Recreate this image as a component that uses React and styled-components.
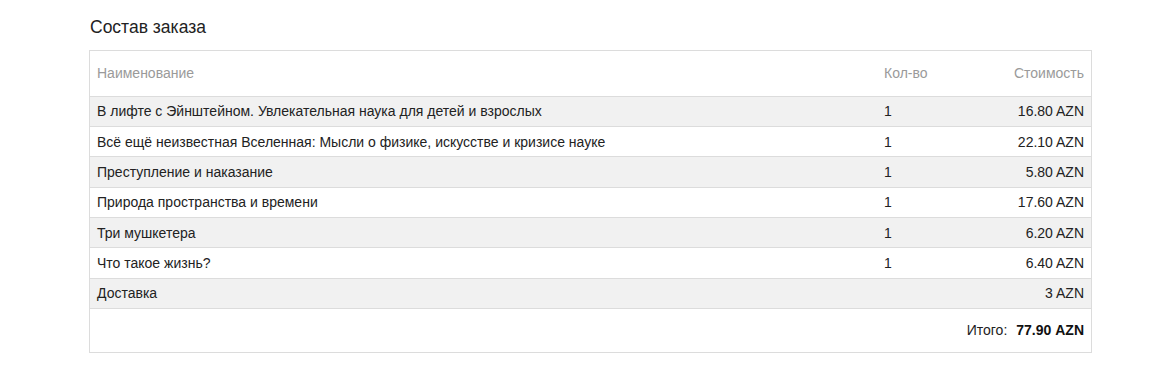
import React from 'react'
import styled, { createGlobalStyle } from 'styled-components'

const Global = createGlobalStyle`
  body {
    margin: 0;
    background: #fff;
    font-family: "Liberation Sans", Arial, sans-serif;
    color: #333;
  }
`

const Page = styled.div`
  padding: 18px 79px 0 89px;
  width: 1003px;
`

const Title = styled.h3`
  margin: 0 0 13px 1px;
  font-size: 17.5px;
  font-weight: normal;
  line-height: 19px;
  color: #222;
`

const Box = styled.div`
  border: 1px solid #dcdcdc;
`

const Row = styled.div`
  display: grid;
  grid-template-columns: 1fr 115px 101px;
  align-items: center;
  height: ${p => p.$h || '30.33px'};
  box-sizing: border-box;
  border-bottom: ${p => (p.$last ? 'none' : '1px solid #dcdcdc')};
  background: ${p => (p.$striped ? '#f1f1f1' : '#fff')};
  font-size: 14px;
  color: ${p => (p.$head ? '#9a9a9a' : '#222')};
`

const Cell = styled.div`
  padding: 0 7px 0 ${p => (p.$qty ? '9px' : '7px')};
  white-space: nowrap;
  text-align: ${p => (p.$right ? 'right' : 'left')};
  grid-column: ${p => p.$span || 'auto'};
`

const Total = styled.b`
  margin-left: 9px;
  color: #111;
`

const items = [
  ['В лифте с Эйнштейном. Увлекательная наука для детей и взрослых', 1, '16.80 AZN'],
  ['Всё ещё неизвестная Вселенная: Мысли о физике, искусстве и кризисе науке', 1, '22.10 AZN'],
  ['Преступление и наказание', 1, '5.80 AZN'],
  ['Природа пространства и времени', 1, '17.60 AZN'],
  ['Три мушкетера', 1, '6.20 AZN'],
  ['Что такое жизнь?', 1, '6.40 AZN'],
]

export default function App() {
  return (
    <>
      <Global />
      <Page>
        <Title>Состав заказа</Title>
        <Box>
          <Row $head $h="45.7px">
            <Cell>Наименование</Cell>
            <Cell $qty>Кол-во</Cell>
            <Cell $right>Стоимость</Cell>
          </Row>
          {items.map((it, i) => (
            <Row key={i} $striped={i % 2 === 0}>
              <Cell>{it[0]}</Cell>
              <Cell $qty>{it[1]}</Cell>
              <Cell $right>{it[2]}</Cell>
            </Row>
          ))}
          <Row $striped>
            <Cell>Доставка</Cell>
            <Cell $qty></Cell>
            <Cell $right>3 AZN</Cell>
          </Row>
          <Row $last $h="43px">
            <Cell $span="1 / 4" $right>
              Итого:<Total>77.90 AZN</Total>
            </Cell>
          </Row>
        </Box>
      </Page>
    </>
  )
}
